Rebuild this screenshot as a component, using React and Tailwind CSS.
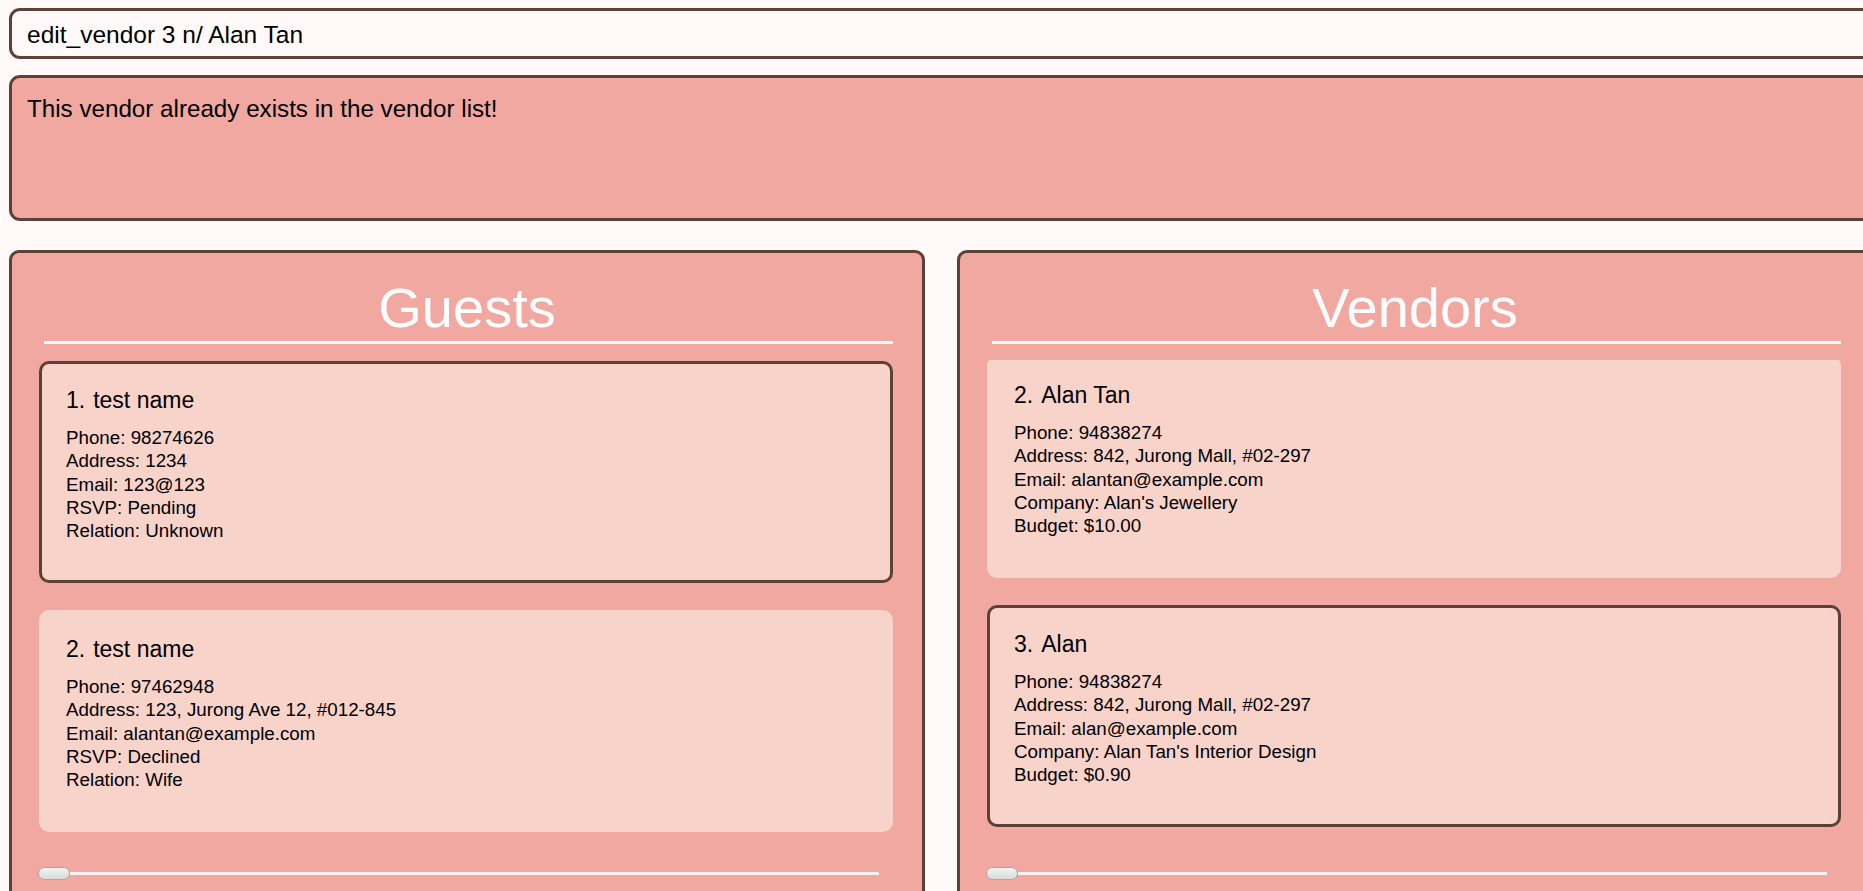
import React from 'react';

const guests = [
    {
        id: 1,
        name: 'test name',
        selected: true,
        lines: ['Phone: 98274626', 'Address: 1234', 'Email: 123@123', 'RSVP: Pending', 'Relation: Unknown'],
    },
    {
        id: 2,
        name: 'test name',
        lines: ['Phone: 97462948', 'Address: 123, Jurong Ave 12, #012-845', 'Email: alantan@example.com', 'RSVP: Declined', 'Relation: Wife'],
    },
];

const vendors = [
    {
        id: 2,
        name: 'Alan Tan',
        lines: ['Phone: 94838274', 'Address: 842, Jurong Mall, #02-297', 'Email: alantan@example.com', "Company: Alan's Jewellery", 'Budget: $10.00'],
    },
    {
        id: 3,
        name: 'Alan',
        selected: true,
        lines: ['Phone: 94838274', 'Address: 842, Jurong Mall, #02-297', 'Email: alan@example.com', "Company: Alan Tan's Interior Design", 'Budget: $0.90'],
    },
];

// Carte d'une personne (invité ou fournisseur)
const PersonCard = ({ person }) => (
    <div
        className={
            'h-[222px] shrink-0 rounded-[10px] bg-[#f7d3ca] border-[3px] pl-[24px] pt-[23px] ' +
            (person.selected ? 'border-[#5d4037]' : 'border-transparent')
        }
    >
        <div className="text-[23px] leading-[27px] text-black flex">
            <span>{person.id}.</span>
            <span className="ml-[8px]">{person.name}</span>
        </div>
        <div className="mt-[12px] text-[18.75px] leading-[23.3px] text-black">
            {person.lines.map((line, i) => (
                <div key={i}>{line}</div>
            ))}
        </div>
    </div>
);

const ListPanel = ({ title, items, offset }) => (
    <div className="h-[660px] border-[3px] border-[#5d4037] rounded-[10px] bg-[#f0a8a0] flex flex-col">
        <div className="pt-[27px] text-[56px] leading-[56px] text-white text-center">{title}</div>
        <div className="mt-[5px] h-[3px] bg-white ml-[32px] mr-[29px]" />

        <div className="mt-[16px] h-[495px] overflow-hidden ml-[27px] mr-[29px]">
            <div className={'flex flex-col gap-[27px] ' + offset}>
                {items.map((p) => (
                    <PersonCard key={p.id} person={p} />
                ))}
            </div>
        </div>

        {/* Barre de défilement horizontale */}
        <div className="mt-[12px] h-[13px] flex items-center ml-[26px] mr-[43px]">
            <div className="w-[32px] h-[13px] rounded-full border border-[#a9a9a9] bg-gradient-to-b from-[#f4f4f4] to-[#d9d9d9] shrink-0" />
            <div className="flex-1 h-[3px] bg-[#fdf1ef]" />
        </div>
    </div>
);

export default function App() {
    return (
        <div
            className="w-screen h-screen overflow-hidden bg-[#fffaf9]"
            style={{ fontFamily: '"Liberation Sans", Arial, sans-serif' }}
        >
            <div className="w-[1882px] pl-[9px] pr-[9px] pt-[8px] flex flex-col">
                {/* Champ de commande */}
                <div className="h-[51px] border-[3px] border-[#5d4037] rounded-[11px] bg-[#fffaf9] px-[15px] pt-[10px]">
                    <div className="text-[24.5px] leading-[28px] text-black">edit_vendor 3 n/ Alan Tan</div>
                </div>

                {/* Zone de résultat */}
                <div className="mt-[16px] h-[146px] border-[3px] border-[#5d4037] rounded-[11px] bg-[#f0a8a0] px-[15px] pt-[17px]">
                    <div className="text-[24.2px] leading-[28px] text-black">This vendor already exists in the vendor list!</div>
                </div>

                {/* Listes */}
                <div className="mt-[29px] grid grid-cols-2 gap-[32px]">
                    <ListPanel title="Guests" items={guests} offset="pt-[1px]" />
                    <ListPanel title="Vendors" items={vendors} offset="-mt-[4px]" />
                </div>
            </div>
        </div>
    );
}
